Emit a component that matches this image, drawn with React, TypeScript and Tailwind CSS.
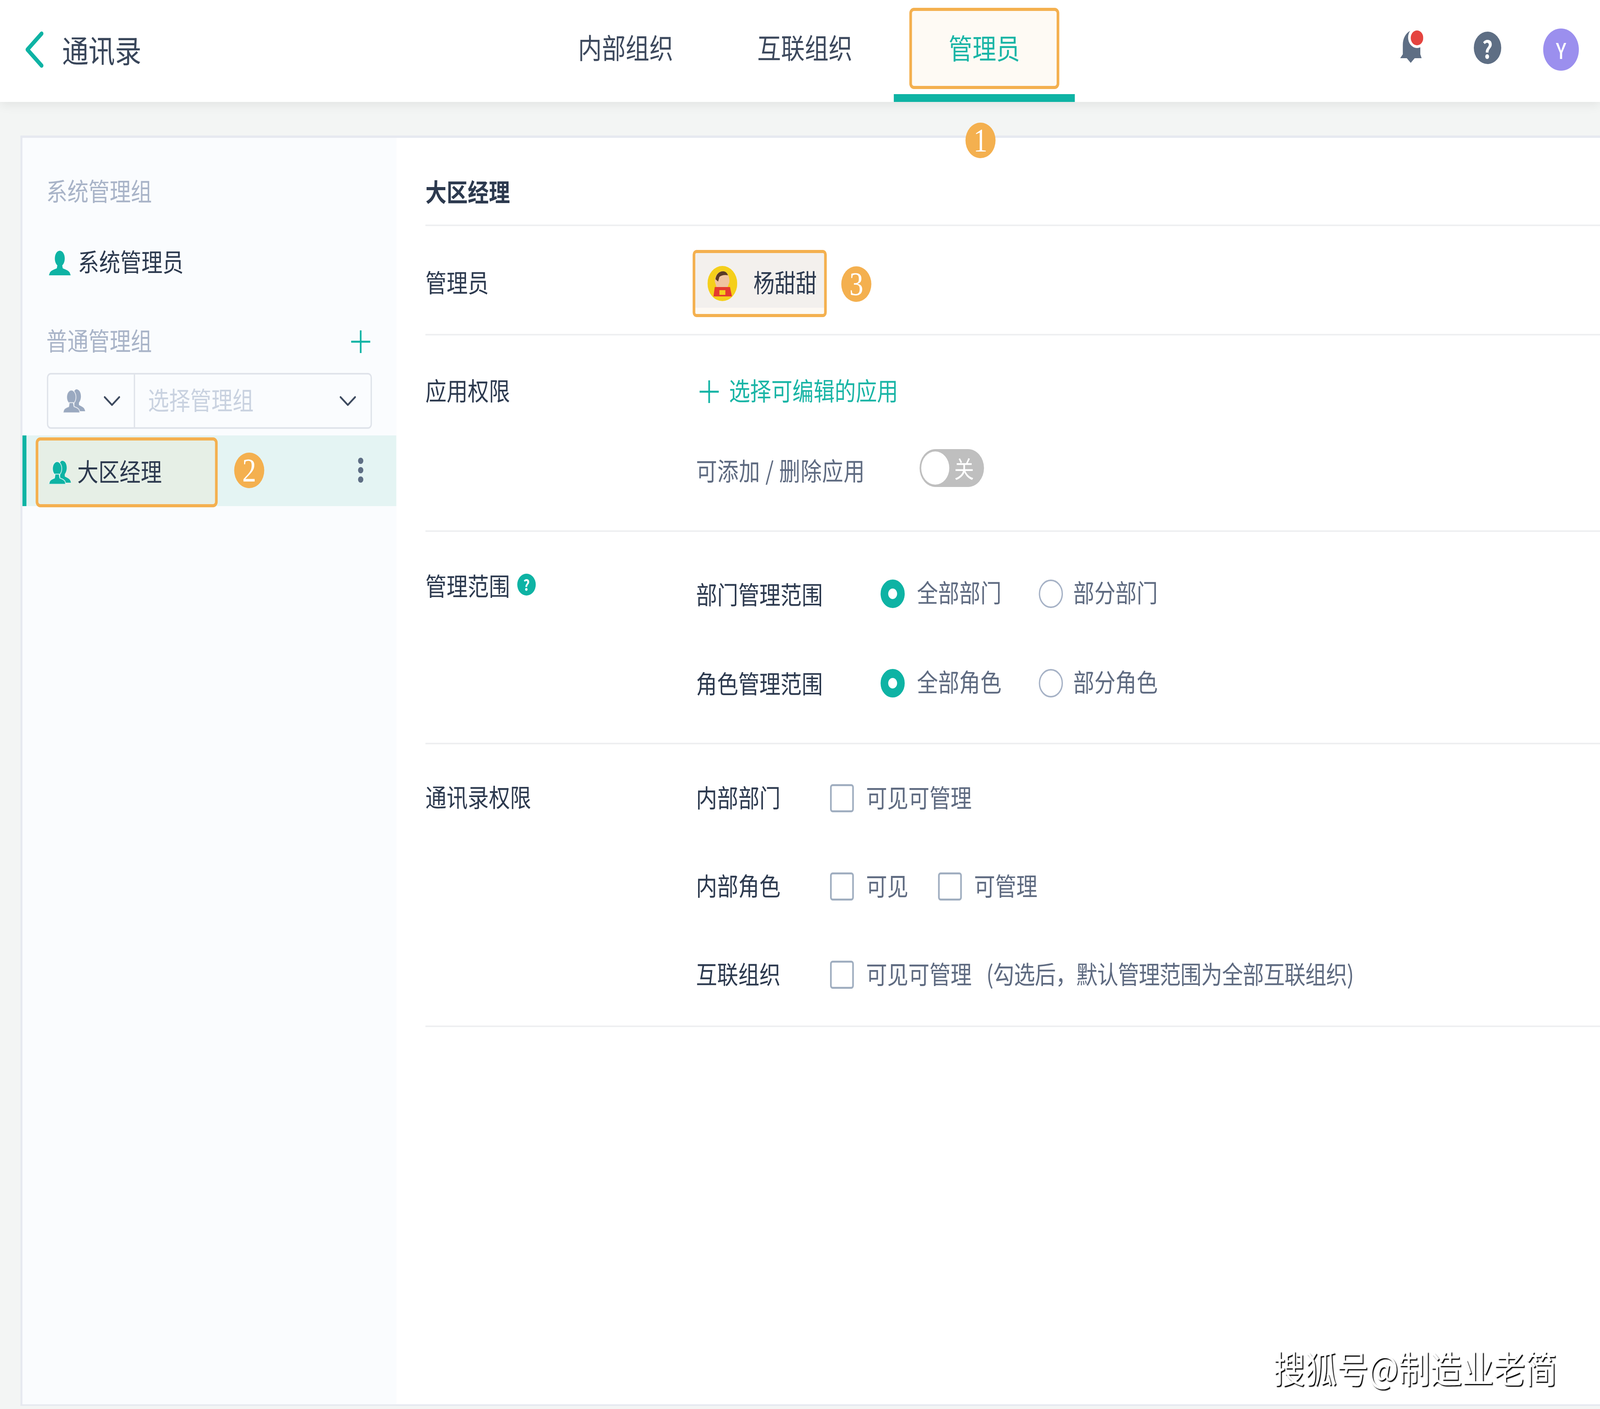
const teal = '#0eb3a4'
// Noto sits low in its line box, this lifts the text a few px while keeping the 100px row
const lift = 'leading-[88px] pb-[12px]'

function Marker({ n, className = '' }: { n: number; className?: string }) {
  return (
    <div className={`w-[91px] h-[91px] rounded-full bg-[#f4b04f] text-white flex items-center justify-center font-['Liberation_Serif',serif] text-[84px] leading-none shrink-0 ${className}`}>
      {n}
    </div>
  )
}

function PersonIcon({ color = teal }: { color?: string }) {
  return (
    <svg width="66" height="63" viewBox="0 0 66 63" fill={color} className="shrink-0">
      <ellipse cx="33" cy="20" rx="15" ry="20" />
      <path d="M26 36h14l2 9c8 3 18 6 21 11l3 7H0l3-7c3-5 13-8 21-11z" />
    </svg>
  )
}

function GroupIcon({ color = teal }: { color?: string }) {
  return (
    <svg width="67" height="60" viewBox="0 0 67 60" fill={color} className="shrink-0">
      <path d="M40 0c9 0 14 8 14 18 0 7-3 13-6 16v6c6 3 15 6 17 11l2 5H48c-2-6-10-9-14-12V4c2-2 4-4 6-4z" />
      <g stroke="#fff" strokeOpacity="0.7" strokeWidth="2.5">
        <ellipse cx="25" cy="20" rx="14" ry="18" />
        <path d="M19 34h12l2 10c6 2 14 4 16 9l2 7H0l2-7c2-5 10-7 15-9z" />
      </g>
    </svg>
  )
}

function Chevron() {
  return (
    <svg width="50" height="28" viewBox="0 0 50 28" fill="none" stroke="#3d4a5f" strokeWidth="5" strokeLinecap="round" strokeLinejoin="round">
      <path d="M3 4l22 20L47 4" />
    </svg>
  )
}

function Plus() {
  return (
    <svg width="58" height="58" viewBox="0 0 58 58" stroke={teal} strokeWidth="5">
      <path d="M0 29h58M29 0v58" />
    </svg>
  )
}

function Radio({ checked, label }: { checked?: boolean; label: string }) {
  return checked ? (
    <div className="flex items-center gap-[37px] text-[#5f6b81]">
      <div className="w-[73px] h-[73px] rounded-full border-[23px] border-[#0eb3a4] bg-white" />
      <span className={lift}>{label}</span>
    </div>
  ) : (
    <div className="flex items-center gap-[31px] text-[#5f6b81]">
      <div className="w-[73px] h-[73px] rounded-full border-[4px] border-[#a6b2c6] bg-white" />
      <span className={lift}>{label}</span>
    </div>
  )
}

function Check({ label }: { label: string }) {
  return (
    <div className="flex items-center gap-[37px] text-[#5f6b81]">
      <div className="w-[72px] h-[72px] rounded-[8px] border-[5px] border-[#a0aec0] bg-white -mt-[2px]" />
      <span className={lift}>{label}</span>
    </div>
  )
}

export default function App() {
  // the browser can come up narrower than the 4844px design width, so fit it to the window
  const fit = { transform: `scaleX(${window.innerWidth / 4844})` }

  return (
    <div className="w-screen h-screen overflow-hidden">
      <div style={fit} className="relative origin-top-left w-[4844px] h-[3608px] overflow-hidden bg-[#f3f5f4] font-['Noto_Sans_CJK_SC','Noto_Sans',sans-serif] text-[64px] leading-[100px] text-[#2d3a4f]">
        {/* Header */}
        <div className="relative z-10 h-[261px] bg-white flex shadow-[0_6px_30px_rgba(0,0,0,0.08)]">
          <div className="w-[1619px] pl-[76px] flex items-center gap-[55px]">
            <svg width="57" height="94" viewBox="0 0 57 94" fill="none" stroke={teal} strokeWidth="11" strokeLinecap="round" strokeLinejoin="round" className="-mt-[8px]">
              <path d="M50 6L7 47l43 41" />
            </svg>
            <span className="text-[80px] text-[#39465a] leading-[100px] pb-[12px]">通讯录</span>
          </div>
          <div className="flex h-full text-[72px] text-[#3e4a5e]">
            <div className="w-[544px] pl-[6px] pb-[24px] flex items-center justify-center">内部组织</div>
            <div className="w-[543px] pl-[4px] pb-[24px] flex items-center justify-center">互联组织</div>
            <div className="w-[548px] h-full flex flex-col items-center border-b-[20px] border-[#0eb3a4]">
              <div className="mt-[20px] w-[454px] h-[208px] rounded-[14px] border-[8px] border-[#f4b04f] bg-[#fefaf4] pb-[8px] flex items-center justify-center text-[#1ab5a6]">
                管理员
              </div>
            </div>
          </div>
          <div className="ml-auto mr-[64px] flex items-center">
            <svg width="70" height="84" viewBox="0 0 70 84" className="-mt-[23px]">
              <path fill="#5e6e84" d="M32 1C16 8 8 22 8 38v24L0 72h65l-4-10V38C61 22 48 6 32 1zM20 72h24l-12 12z" />
              <circle cx="51" cy="19" r="27" fill="#fff" />
              <circle cx="51" cy="20" r="19" fill="#e5443f" />
            </svg>
            <div className="ml-[153px] w-[83px] h-[83px] rounded-full bg-[#5e6e84] text-white flex items-center justify-center text-[62px] font-bold leading-none -mt-[16px]">?</div>
            <div className="ml-[127px] w-[108px] h-[108px] rounded-full bg-[#9b8fee] text-white flex items-center justify-center text-[56px] font-medium leading-none -mt-[7px]">Y</div>
          </div>
        </div>

        <Marker n={1} className="absolute z-20 left-[2923px] top-[314px]" />

        {/* Panel */}
        <div className="mt-[86px] ml-[62px] h-[3253px] flex border-l-[6px] border-t-[6px] border-b-[4px] border-[#e6e9f0]">
          <div className="w-[1132px] h-full bg-[#fafcfe] flex flex-col">
            <div className={`mt-[89px] pl-[72px] text-[#a9b4c8] ${lift}`}>系统管理组</div>
            <div className="mt-[81px] pl-[80px] flex items-center gap-[22px]">
              <PersonIcon />
              <span className={lift}>系统管理员</span>
            </div>
            <div className="mt-[102px] pl-[72px] pr-[79px] flex items-center justify-between text-[#a9b4c8]">
              <span className={lift}>普通管理组</span>
              <Plus />
            </div>
            <div className="mt-[30px] ml-[74px] mr-[74px] h-[143px] rounded-[12px] border-[4px] border-[#dfe3ea] flex items-center">
              <div className="w-[263px] h-full border-r-[4px] border-[#dfe3ea] flex items-center pl-[45px] gap-[56px]">
                <GroupIcon color="#9aa9c0" />
                <Chevron />
              </div>
              <span className={`ml-[39px] text-[#c9d2e0] ${lift}`}>选择管理组</span>
              <div className="ml-auto mr-[44px] flex">
                <Chevron />
              </div>
            </div>
            <div className="mt-[17px] h-[181px] bg-[#e4f4f3] border-l-[12px] border-[#0eb3a4] flex items-start">
              <div className="ml-[28px] mt-[5px] w-[551px] h-[179px] shrink-0 rounded-[14px] border-[8px] border-[#f4b04f] bg-[#e6efe6] flex items-center pl-[32px] gap-[19px]">
                <GroupIcon />
                <span className={lift}>大区经理</span>
              </div>
              <Marker n={2} className="ml-[50px] mt-[44px]" />
              <div className="ml-auto mr-[100px] mt-[57px] flex flex-col gap-[8px]">
                <div className="w-[16px] h-[16px] rounded-full bg-[#5e6e84]" />
                <div className="w-[16px] h-[16px] rounded-full bg-[#5e6e84]" />
                <div className="w-[16px] h-[16px] rounded-full bg-[#5e6e84]" />
              </div>
            </div>
          </div>

          <div className="flex-1 h-full bg-white pl-[88px]">
            <div className="h-[226px] border-b-[4px] border-[#eeeff1] flex items-end pb-[37px] font-bold">大区经理</div>

            <div className="h-[280px] border-b-[4px] border-[#eeeff1] flex items-start">
              <div className="w-[809px] mt-[91px]">管理员</div>
              <div className="mt-[61px] w-[406px] h-[172px] rounded-[12px] border-[8px] border-[#f4b04f] bg-[linear-gradient(#f3f0ed_90%,#fdf9f3_90%)] flex items-center pl-[37px] gap-[49px]">
                <svg width="90" height="90" viewBox="0 0 90 90" className="shrink-0">
                  <circle cx="45" cy="45" r="45" fill="#f5cf1b" />
                  <path d="M22 40c0-18 14-28 26-26 12 2 20 14 18 28l-6 14H28z" fill="#f0c3a0" />
                  <path d="M24 34c2-14 14-22 26-20 6 1 10 5 12 10-10-2-20 0-26 4l-4 12z" fill="#5a3a26" />
                  <path d="M22 54h46l6 24H18z" fill="#e53a2f" />
                  <rect x="36" y="62" width="18" height="12" fill="#f5cf1b" />
                </svg>
                <span className={lift}>杨甜甜</span>
              </div>
              <Marker n={3} className="ml-[44px] mt-[103px]" />
            </div>

            <div className="h-[503px] border-b-[4px] border-[#eeeff1] flex items-start">
              <div className="w-[819px] mt-[88px]">应用权限</div>
              <div className="mt-[94px] flex flex-col gap-[105px]">
                <div className="pl-[11px] flex items-center gap-[31px] text-[#1ab5a6]">
                  <Plus />
                  <span className={lift}>选择可编辑的应用</span>
                </div>
                <div className="flex items-center gap-[165px] text-[#5f6b81]">
                  <span className={`tracking-[1px] ${lift}`}>可添加 / 删除应用</span>
                  <div className="w-[195px] h-[97px] -mt-[20px] rounded-full bg-[#bfbfbf] flex items-center pl-[5px] gap-[15px] text-white text-[60px]">
                    <div className="w-[85px] h-[85px] rounded-full bg-white" />
                    <span className="leading-none">关</span>
                  </div>
                </div>
              </div>
            </div>

            <div className="h-[544px] border-b-[4px] border-[#eeeff1] flex items-start">
              <div className="w-[819px] mt-[85px] flex items-center gap-[22px]">
                <span>管理范围</span>
                <div className="w-[56px] h-[56px] rounded-full bg-[#0eb3a4] text-white flex items-center justify-center text-[38px] font-bold leading-none">?</div>
              </div>
              <div className="mt-[108px] flex flex-col gap-[129px]">
                <div className="flex items-center">
                  <span className={`w-[559px] translate-y-[5px] ${lift}`}>部门管理范围</span>
                  <div className="w-[479px]"><Radio checked label="全部部门" /></div>
                  <Radio label="部分部门" />
                </div>
                <div className="flex items-center">
                  <span className={`w-[559px] translate-y-[4px] ${lift}`}>角色管理范围</span>
                  <div className="w-[479px]"><Radio checked label="全部角色" /></div>
                  <Radio label="部分角色" />
                </div>
              </div>
            </div>

            <div className="h-[724px] border-b-[4px] border-[#eeeff1] flex items-start">
              <div className="w-[819px] mt-[82px]">通讯录权限</div>
              <div className="mt-[89px] flex flex-col gap-[126px]">
                <div className="flex items-center">
                  <span className={`w-[406px] ${lift}`}>内部部门</span>
                  <Check label="可见可管理" />
                </div>
                <div className="flex items-center">
                  <span className={`w-[406px] ${lift}`}>内部角色</span>
                  <Check label="可见" />
                  <div className="ml-[90px]"><Check label="可管理" /></div>
                </div>
                <div className="flex items-center">
                  <span className={`w-[406px] ${lift}`}>互联组织</span>
                  <Check label="可见可管理" />
                  <span className={`ml-[44px] text-[#5f6b81] tracking-[-1px] ${lift}`}>(勾选后，默认管理范围为全部互联组织)</span>
                </div>
              </div>
            </div>
          </div>
        </div>

        {/* Watermark */}
        <div className="absolute left-[3855px] top-[3435px] text-[96px] leading-[130px] text-white [text-shadow:3px_3px_2px_#000]">
          搜狐号@制造业老简
        </div>
      </div>
    </div>
  )
}
